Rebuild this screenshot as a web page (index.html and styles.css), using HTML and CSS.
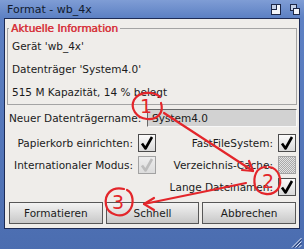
FILE: index.html
```html
<!DOCTYPE html>
<html lang="de">
  <head>
    <meta charset="UTF-8" />
    <title>Format - wb_4x</title>
    <link rel="stylesheet" href="styles.css">
  </head>
  <body>
    <div class="window">
      <div class="titlebar">
        <span class="title">Format - wb_4x</span>
        <span class="gadgets">
          <svg width="10" height="11" viewBox="0 0 10 11">
            <rect x="0.5" y="0.5" width="9" height="10" fill="#f3f5fa" stroke="#1c2747" />
            <rect x="0.5" y="0.5" width="5" height="5" fill="#c3cfe6" stroke="#1c2747" />
          </svg>
          <svg width="10" height="11" viewBox="0 0 10 11">
            <rect x="0.5" y="0.5" width="6" height="6" fill="#c3cfe6" stroke="#1c2747" />
            <rect x="3.5" y="4.5" width="6" height="6" fill="#f3f5fa" stroke="#1c2747" />
          </svg>
        </span>
      </div>

      <div class="panel">
        <fieldset class="info">
          <legend>Aktuelle Information</legend>
          <div class="line">Gerät 'wb_4x'</div>
          <div class="line">Datenträger 'System4.0'</div>
          <div class="line">515 M Kapazität, 14 % belegt</div>
        </fieldset>

        <div class="name-row">
          <label>Neuer Datenträgername:</label>
          <div class="field">System4.0</div>
        </div>

        <div class="options">
          <div class="col">
            <div class="opt">
              <span>Papierkorb einrichten:</span>
              <span class="check"><svg viewBox="0 0 16 16"><path d="M3 8.5 L6.5 13.5 L13 2" /></svg></span>
            </div>
            <div class="opt">
              <span>Internationaler Modus:</span>
              <span class="check off"><svg viewBox="0 0 16 16"><path d="M3 8.5 L6.5 13.5 L13 2" /></svg></span>
            </div>
          </div>
          <div class="col">
            <div class="opt">
              <span>FastFileSystem:</span>
              <span class="check"><svg viewBox="0 0 16 16"><path d="M3 8.5 L6.5 13.5 L13 2" /></svg></span>
            </div>
            <div class="opt">
              <span>Verzeichnis-Cache:</span>
              <span class="check dotted"></span>
            </div>
            <div class="opt">
              <span>Lange Dateinamen:</span>
              <span class="check"><svg viewBox="0 0 16 16"><path d="M3 8.5 L6.5 13.5 L13 2" /></svg></span>
            </div>
          </div>
        </div>

        <div class="buttons">
          <button>Formatieren</button>
          <button>Schnell</button>
          <button>Abbrechen</button>
        </div>
      </div>

      <div class="footer">
        <svg width="11" height="11" viewBox="0 0 11 11">
          <path d="M10.5 1 L1 10.5 M10.5 4.5 L4.5 10.5 M10.5 8 L8 10.5" stroke="#dfe7f5" stroke-width="1" />
          <path d="M10.5 2.5 L2.5 10.5 M10.5 6 L6 10.5" stroke="#2c3f70" stroke-width="1" />
        </svg>
      </div>

      <!-- handwritten markup on top of the dialog -->
      <svg class="marks" width="304" height="249" viewBox="0 0 304 249">
        <g fill="none" stroke="#e3262b" stroke-width="2.2" stroke-linecap="round" stroke-linejoin="round">
          <path d="M160 97 C154 91 139 91 134 100 C130 108 136 118 147 119 C158 120 164 112 161 103" />
          <path d="M164 113 L253 171" />
          <path d="M242 170 L253 171 L249 161" />
          <path d="M266 167 C256 167 253 177 255 186 C258 195 272 197 278 189 C283 181 279 168 269 167" />
          <path d="M246 183 L144 204" />
          <path d="M154 198 L144 204 L154 210" />
          <path d="M124 189 C111 186 104 195 106 205 C108 215 122 219 129 211 C135 204 133 193 127 190" />
        </g>
        <g class="nums">
          <text x="140" y="113">1</text>
          <text x="262" y="188">2</text>
          <text x="112" y="209">3</text>
        </g>
      </svg>
    </div>
  </body>
</html>
```

FILE: styles.css
```css
body {
  margin: 0;
  font-family: "DejaVu Sans", sans-serif;
  font-size: 10.5px;
  color: #1b1b1b;
}
.window {
  position: relative;
  width: 304px;
  height: 249px;
  display: flex;
  flex-direction: column;
  background: linear-gradient(#5f82c5, #4b6db0);
}
.titlebar {
  height: 18px;
  display: flex;
  align-items: center;
  padding: 0 4px 0 7px;
  font-size: 11px;
  background: linear-gradient(#7f9dd5, #5c80c3);
}
.title {
  flex: 1;
  color: #111a2e;
}
.gadgets {
  display: flex;
  gap: 9px;
  padding-top: 1px;
}
.panel {
  flex: 1;
  margin: 0 4px;
  display: flex;
  flex-direction: column;
  background: #efedea;
  border: 1px solid #1d2b55;
}
.info {
  margin: 3px 2px 0;
  padding: 0 4px;
  border: 1px solid #a4a4a4;
  min-width: 0;
}
.info legend {
  padding: 0 2px;
  margin-left: -3px;
  line-height: 13px;
  color: #d6333a;
  text-shadow: 0.5px 0 0 #d6333a;
}
.line {
  line-height: 23px;
}
.name-row {
  display: flex;
  align-items: center;
  height: 18px;
  margin-top: 4px;
  padding: 0 2px 0 4px;
  white-space: nowrap;
}
.name-row label {
  flex: 1;
}
.field {
  flex: none;
  width: 150px;
  height: 18px;
  box-sizing: border-box;
  padding-left: 4px;
  line-height: 16px;
  background: #d2d2d2;
  border: 1px solid;
  border-color: #686868 #f7f7f7 #f7f7f7 #686868;
}
.options {
  display: grid;
  grid-template-columns: 151px 1fr;
  align-items: start;
  margin-top: 5px;
  padding-right: 3px;
  white-space: nowrap;
}
.col {
  display: flex;
  flex-direction: column;
}
.opt {
  height: 22px;
  display: flex;
  align-items: center;
  justify-content: flex-end;
  gap: 5px;
}
.check {
  flex: none;
  width: 18px;
  height: 18px;
  box-sizing: border-box;
  border: 1px solid #4c4c4c;
  background: linear-gradient(#fbfbfb, #d9d9d9);
}
.check svg {
  display: block;
  width: 16px;
  height: 16px;
  fill: none;
  stroke: #000;
  stroke-width: 2.6;
  stroke-linejoin: round;
}
.check.off {
  border-color: #a2a2a2;
  background: linear-gradient(#eeeeee, #dcdcdc);
}
.check.off svg {
  stroke: #bdbdbd;
}
.check.dotted {
  border-color: #a2a2a2;
  background: repeating-conic-gradient(#a9a9a9 0 25%, #e2e2e2 0 50%) 0 0 / 2px 2px;
}
.buttons {
  display: grid;
  grid-template-columns: repeat(3, 1fr);
  gap: 3px;
  margin-top: 4px;
  padding: 0 3px 0 4px;
}
.buttons button {
  height: 22px;
  padding: 0;
  font: inherit;
  color: #1b1b1b;
  border: 1px solid #575757;
  background: linear-gradient(#f3f3f3, #c8c8c8);
}
.footer {
  height: 19px;
  display: flex;
  justify-content: flex-end;
  align-items: flex-end;
  padding: 0 2px 1px 0;
}
.marks {
  position: absolute;
  top: 0;
  left: 0;
  pointer-events: none;
}
.nums text {
  font-family: "DejaVu Sans", sans-serif;
  font-size: 19px;
  fill: #e3262b;
}
```
